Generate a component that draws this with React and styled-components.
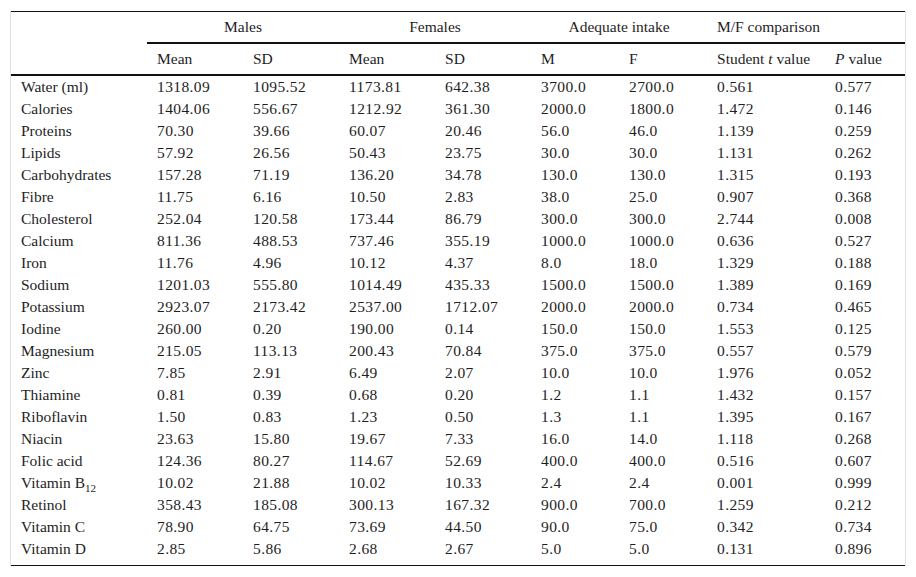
import React from 'react';
import styled, { createGlobalStyle } from 'styled-components';

const serif = `"Liberation Serif", "Times New Roman", Times, serif`;

const GlobalStyle = createGlobalStyle`
  body {
    margin: 0;
    background: #fff;
    font-family: ${serif};
    color: #1e1e1e;
  }
`;

const rows = [
  ['Water (ml)', '1318.09', '1095.52', '1173.81', '642.38', '3700.0', '2700.0', '0.561', '0.577'],
  ['Calories', '1404.06', '556.67', '1212.92', '361.30', '2000.0', '1800.0', '1.472', '0.146'],
  ['Proteins', '70.30', '39.66', '60.07', '20.46', '56.0', '46.0', '1.139', '0.259'],
  ['Lipids', '57.92', '26.56', '50.43', '23.75', '30.0', '30.0', '1.131', '0.262'],
  ['Carbohydrates', '157.28', '71.19', '136.20', '34.78', '130.0', '130.0', '1.315', '0.193'],
  ['Fibre', '11.75', '6.16', '10.50', '2.83', '38.0', '25.0', '0.907', '0.368'],
  ['Cholesterol', '252.04', '120.58', '173.44', '86.79', '300.0', '300.0', '2.744', '0.008'],
  ['Calcium', '811.36', '488.53', '737.46', '355.19', '1000.0', '1000.0', '0.636', '0.527'],
  ['Iron', '11.76', '4.96', '10.12', '4.37', '8.0', '18.0', '1.329', '0.188'],
  ['Sodium', '1201.03', '555.80', '1014.49', '435.33', '1500.0', '1500.0', '1.389', '0.169'],
  ['Potassium', '2923.07', '2173.42', '2537.00', '1712.07', '2000.0', '2000.0', '0.734', '0.465'],
  ['Iodine', '260.00', '0.20', '190.00', '0.14', '150.0', '150.0', '1.553', '0.125'],
  ['Magnesium', '215.05', '113.13', '200.43', '70.84', '375.0', '375.0', '0.557', '0.579'],
  ['Zinc', '7.85', '2.91', '6.49', '2.07', '10.0', '10.0', '1.976', '0.052'],
  ['Thiamine', '0.81', '0.39', '0.68', '0.20', '1.2', '1.1', '1.432', '0.157'],
  ['Riboflavin', '1.50', '0.83', '1.23', '0.50', '1.3', '1.1', '1.395', '0.167'],
  ['Niacin', '23.63', '15.80', '19.67', '7.33', '16.0', '14.0', '1.118', '0.268'],
  ['Folic acid', '124.36', '80.27', '114.67', '52.69', '400.0', '400.0', '0.516', '0.607'],
  ['B12', '10.02', '21.88', '10.02', '10.33', '2.4', '2.4', '0.001', '0.999'],
  ['Retinol', '358.43', '185.08', '300.13', '167.32', '900.0', '700.0', '1.259', '0.212'],
  ['Vitamin C', '78.90', '64.75', '73.69', '44.50', '90.0', '75.0', '0.342', '0.734'],
  ['Vitamin D', '2.85', '5.86', '2.68', '2.67', '5.0', '5.0', '0.131', '0.896'],
];

const widths = [136, 96, 96, 96, 96, 88, 88, 118, 80];

export default function App() {
  return (
    <>
      <GlobalStyle />
      <Frame>
        <Table>
          <colgroup>
            {widths.map((w, i) => (
              <col key={i} style={{ width: w }} />
            ))}
          </colgroup>
          <thead>
            <GroupRow>
              <GroupCell rowSpan={2} />
              <GroupCell colSpan={2} $align="center">Males</GroupCell>
              <GroupCell colSpan={2} $align="center">Females</GroupCell>
              <GroupCell colSpan={2} $align="center">Adequate intake</GroupCell>
              <GroupCell colSpan={2}>M/F comparison</GroupCell>
            </GroupRow>
            <SubRow>
              <SubCell>Mean</SubCell>
              <SubCell>SD</SubCell>
              <SubCell>Mean</SubCell>
              <SubCell>SD</SubCell>
              <SubCell>M</SubCell>
              <SubCell>F</SubCell>
              <SubCell>
                Student <i>t</i> value
              </SubCell>
              <SubCell>
                <i>P</i> value
              </SubCell>
            </SubRow>
          </thead>
          <tbody>
            {rows.map((r) => (
              <BodyRow key={r[0]}>
                {r.map((v, i) => (
                  <Cell key={i} $numeric={i > 0}>
                    {v === 'B12' ? (
                      <>
                        Vitamin B<Sub>12</Sub>
                      </>
                    ) : (
                      v
                    )}
                  </Cell>
                ))}
              </BodyRow>
            ))}
          </tbody>
        </Table>
      </Frame>
    </>
  );
}

const Frame = styled('div')`
  margin: 11px 0 0 10px;
  width: 894px;
  border-left: 1px solid #e2e2e2;
  border-right: 1px solid #e2e2e2;
`;

const Table = styled('table')`
  width: 894px;
  border-collapse: collapse;
  table-layout: fixed;
  font-family: ${serif};
  font-size: 15.5px;
  color: #1e1e1e;
  border-top: 1px solid #111;
  border-bottom: 1px solid #111;
`;

const GroupRow = styled('tr')`
  height: 31px;
`;

const GroupCell = styled('th')`
  font-family: ${serif};
  font-weight: normal;
  text-align: ${(p) => p.$align || 'left'};
  padding: 0 10px;
  line-height: 20px;
  vertical-align: middle;
  white-space: nowrap;
  border-bottom: 2px solid #111;
`;

const SubRow = styled('tr')`
  height: 32px;
`;

const SubCell = styled('th')`
  font-family: ${serif};
  font-weight: normal;
  text-align: left;
  padding: 0 10px;
  line-height: 20px;
  white-space: nowrap;
  border-bottom: 2px solid #111;
`;

const BodyRow = styled('tr')`
  &:last-child td {
    padding-bottom: 5px;
  }
`;

const Cell = styled('td')`
  font-family: ${serif};
  padding: 0 10px;
  height: 22px;
  line-height: 22px;
  white-space: nowrap;
  letter-spacing: ${(p) => (p.$numeric ? '0.4px' : '0')};
`;

const Sub = styled('sub')`
  font-size: 11px;
  line-height: 0;
`;
